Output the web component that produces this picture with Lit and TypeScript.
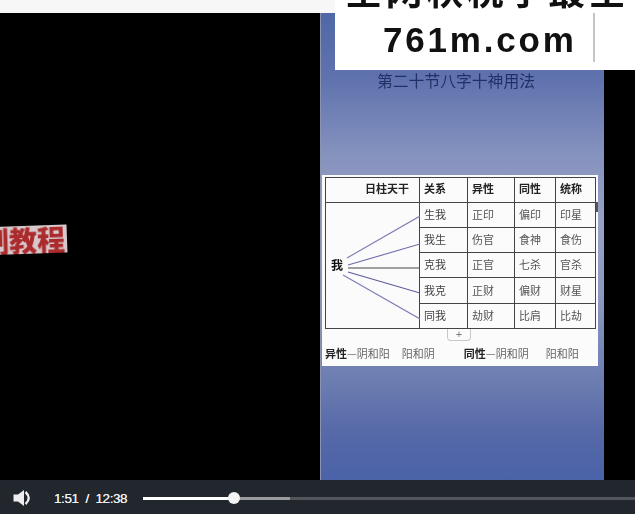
import { LitElement, html, css, svg } from "lit";
import { customElement } from "lit/decorators.js";

const ROWS = [
  ["生我", "正印", "偏印", "印星"],
  ["我生", "伤官", "食神", "食伤"],
  ["克我", "正官", "七杀", "官杀"],
  ["我克", "正财", "偏财", "财星"],
  ["同我", "劫财", "比肩", "比劫"],
];
const LINES = [
  [21, 55, 94, 13, "#7c7cb4"],
  [22, 62, 94, 41, "#6c6ca8"],
  [22, 65, 94, 65, "#444"],
  [22, 69, 94, 90, "#5a5a98"],
  [17, 72, 94, 116, "#7c7cb4"],
];

@customElement("app-root")
export class AppRoot extends LitElement {
  static styles = css`
    :host { display: block; width: 635px; height: 514px; overflow: hidden; position: relative; background: #000; font-family: "Noto Sans CJK SC", "Liberation Serif", serif; }
    .topstrip { height: 13px; background: #f7f7f7; }
    .stage { display: flex; height: 501px; padding-left: 320px; box-sizing: border-box; }
    .slide { width: 284px; height: 467px; display: flex; flex-direction: column; align-items: flex-start;
      background: linear-gradient(180deg, #4f68a6 0%, #5f72ae 14%, #8592be 30%, #98a2c6 45%, #8b97c0 62%, #6a7bb0 80%, #5669a8 90%, #4a62a8 100%);
      border-left: 1px solid #8a93b0; box-sizing: border-box; }
    .title { margin: 59px 0 0 56px; height: 18px; line-height: 18px; font-size: 15.8px; color: #16245a; white-space: nowrap; opacity: .85; filter: blur(.45px); }
    .panel { position: relative; margin: 85px 0 0 1px; width: 276px; height: 191px; background: #fbfbfb; box-sizing: border-box; padding: 2px 3px 0; display: flex; flex-direction: column; filter: blur(.4px); }
    table { border-collapse: collapse; table-layout: fixed; width: 270px; font-size: 11px; color: #555; }
    td { border: 1px solid #444; padding: 0 0 2px 4px; height: 25.3px; box-sizing: border-box; white-space: nowrap; }
    tr.head td { color: #222; font-weight: 700; height: 24.6px; padding-bottom: 3px; }
    tr.head td.day { text-align: right; padding-right: 10px; }
    td.me { position: relative; padding: 0; }
    td.me b { position: absolute; left: 5px; top: 54px; font-size: 12px; line-height: 16px; color: #111; }
    td.me svg { position: absolute; left: 0; top: 0; }
    .rel { color: #444; }
    .tab { align-self: center; width: 24px; height: 12px; line-height: 10px; margin-right: 2px; border: 1px solid #c8c8c8; border-top: 0; border-radius: 0 0 4px 4px; box-sizing: border-box; text-align: center; font-size: 11px; color: #777; font-family: "Liberation Sans", sans-serif; }
    .notes { display: flex; margin-top: 4px; font-size: 11px; line-height: 16px; color: #666; white-space: nowrap; }
    .notes b { color: #222; }
    .n2 { margin-left: 12px; }
    .n3 { margin-left: 29px; }
    .n4 { margin-left: 17px; }
    .tick { position: absolute; left: 274px; top: 27px; width: 1.5px; height: 10px; background: #555; }
    .mark { position: absolute; left: 335px; top: 0; width: 300px; height: 70px; background: #fff; overflow: hidden; color: #111; }
    .mark .cn { position: absolute; left: 10px; top: -31px; font-size: 37px; line-height: 40px; font-weight: 700; letter-spacing: 3.6px; white-space: nowrap; filter: blur(.5px); }
    .mark .url { position: absolute; left: 48px; top: 19px; font-family: "Liberation Sans", sans-serif; font-weight: 700; font-size: 35px; line-height: 42px; letter-spacing: 2.8px; white-space: nowrap; filter: blur(.6px); }
    .mark .bar { position: absolute; left: 258px; top: 13px; width: 2px; height: 49px; background: #c4c4c4; }
    .banner { position: absolute; left: -22px; top: 226px; width: 89px; height: 28px; background: #d6c8cb; transform: rotate(-2deg); color: #ab2a2c; font-size: 28px; font-weight: 900; line-height: 28px; white-space: nowrap; overflow: hidden; filter: blur(.5px); display: flex; justify-content: flex-end; padding-right: 2px; box-sizing: border-box; }
    .controls { position: absolute; left: 0; right: 0; bottom: 0; height: 34px; background: rgba(42,48,56,.8); display: flex; align-items: center; color: #eee; }
    .vol { margin-left: 13px; width: 20px; height: 20px; flex: none; margin-top: 2px; }
    .time { margin-left: 21px; margin-top: 2px; width: 89px; font-family: "Liberation Sans", sans-serif; font-size: 13.5px; letter-spacing: -.4px; white-space: pre; flex: none; text-shadow: 0 0 .6px #fff; }
    .track { position: relative; flex: none; width: 492px; height: 3px; margin-top: 2px; background: rgba(255,255,255,.22); }
    .buf { position: absolute; left: 0; top: 0; height: 3px; width: 147px; background: rgba(255,255,255,.42); }
    .fill { position: absolute; left: 0; top: 0; height: 3px; width: 91px; background: #fff; }
    .knob { position: absolute; left: 85px; top: -4.5px; width: 12px; height: 12px; border-radius: 50%; background: #f4f4f4; }
  `;

  render() {
    return html`
      <div class="topstrip"></div>
      <div class="stage">
        <div class="slide">
          <div class="title">第二十节八字十神用法</div>
          <div class="panel">
            <table>
              <colgroup><col style="width:94px" /><col style="width:48px" /><col style="width:47px" /><col style="width:41px" /><col style="width:40px" /></colgroup>
              <tr class="head"><td class="day">日柱天干</td><td>关系</td><td>异性</td><td>同性</td><td>统称</td></tr>
              ${ROWS.map((r, i) => html`<tr>
                ${i === 0 ? html`<td class="me" rowspan="5"><b>我</b>
                  <svg width="94" height="126" viewBox="0 0 94 126">
                    ${LINES.map(l => svg`<line x1=${l[0]} y1=${l[1]} x2=${l[2]} y2=${l[3]} stroke=${l[4]} stroke-width="1.1" />`)}
                  </svg></td>` : ""}
                <td class="rel">${r[0]}</td><td>${r[1]}</td><td>${r[2]}</td><td>${r[3]}</td>
              </tr>`)}
            </table>
            <div class="tick"></div>
            <div class="tab">+</div>
            <div class="notes">
              <span><b>异性</b>—阴和阳</span><span class="n2">阳和阴</span><span class="n3"><b>同性</b>—阴和阴</span><span class="n4">阳和阳</span>
            </div>
          </div>
        </div>
      </div>
      <div class="banner">制教程</div>
      <div class="mark">
        <div class="cn">全网秋税学最全</div>
        <div class="url">761m.com</div>
        <div class="bar"></div>
      </div>
      <div class="controls">
        <svg class="vol" viewBox="0 0 20 20" aria-hidden="true">
          <path d="M0.5 6.5h4.5l6-4.5v16l-6-4.5H0.5z" fill="#eee" />
          <path d="M12.5 4Q19 10 12.5 16" fill="none" stroke="#eee" stroke-width="2.4" />
        </svg>
        <div class="time">1:51  /  12:38</div>
        <div class="track"><div class="buf"></div><div class="fill"></div><div class="knob"></div></div>
      </div>
    `;
  }
}
